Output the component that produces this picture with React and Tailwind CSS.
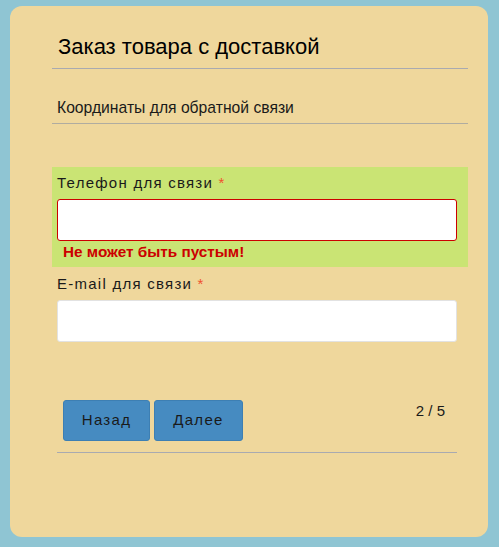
export default function App() {
  const font = { fontFamily: '"Liberation Sans", Arial, sans-serif' };
  return (
    <div className="w-[499px] h-[547px] bg-[#8fc5d3] pt-[6px] pl-[10px]" style={font}>
      <div className="w-[478px] h-[531px] rounded-[12px] bg-[#efd79c] pl-[42px] pr-[20px] pt-[27px]">
        <div className="border-b border-[#a9aab0] pb-[7px]">
          <h1 className="pl-[6px] text-[22px] leading-[28px] text-black">Заказ товара с доставкой</h1>
        </div>
        <div className="mt-[29px] border-b border-[#b0aca0] pb-[5px]">
          <div className="pl-[5px] text-[15.7px] leading-[20px] text-[#1a1a1a]">Координаты для обратной связи</div>
        </div>
        <div className="mt-[43px] bg-[#cae474] pl-[5px] pr-[11px] pt-[6px] pb-[5px]">
          <div className="text-[15px] leading-[20px] tracking-[1.25px] text-[#1a1a1a]">
            Телефон для связи <span className="text-[#f0502d]">*</span>
          </div>
          <input className="mt-[6px] block w-[400px] h-[42px] rounded-[3px] border border-[#cc0000] bg-white outline-none" />
          <div className="mt-[1px] pl-[6px] text-[15.3px] leading-[20px] font-bold text-[#cc0000]">Не может быть пустым!</div>
        </div>
        <div className="pl-[5px] pt-[7px]">
          <div className="text-[15px] leading-[20px] tracking-[1.25px] text-[#1a1a1a]">
            E-mail для связи <span className="text-[#f0502d]">*</span>
          </div>
          <input className="mt-[6px] block w-[400px] h-[42px] rounded-[3px] border border-[#e2e2e2] bg-white outline-none" />
        </div>
        <div className="ml-[5px] mr-[11px] mt-[58px] border-b border-[#a9aab0] pb-[11px] flex items-start justify-between">
          <div className="flex gap-[4px] ml-[6px]">
            <button className="w-[87px] h-[41px] rounded-[3px] bg-[#468bc1] border border-[#3d7fb3] text-[15px] tracking-[1.3px] text-[#1a1a1a]">Назад</button>
            <button className="w-[89px] h-[41px] rounded-[3px] bg-[#468bc1] border border-[#3d7fb3] text-[15px] tracking-[1.3px] text-[#1a1a1a]">Далее</button>
          </div>
          <div className="mr-[12px] mt-[1px] text-[15px] leading-[20px] text-[#1a1a1a]">2 / 5</div>
        </div>
      </div>
    </div>
  );
}
